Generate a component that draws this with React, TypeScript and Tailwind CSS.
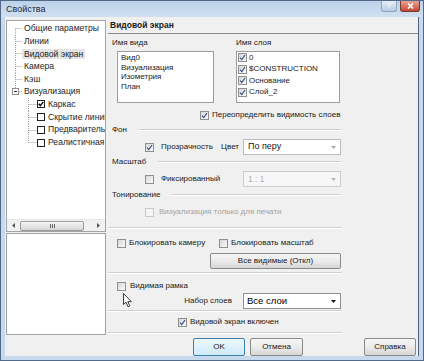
import React from "react";

type BoxProps = { checked?: boolean; disabled?: boolean };

// Win7 style checkbox, scaled down like the screenshot
function Check({ checked, disabled }: BoxProps) {
  return (
    <span
      className={
        "inline-flex w-[9px] h-[9px] shrink-0 items-center justify-center border " +
        (disabled
          ? "border-[#c9c9c9] bg-[#f5f5f5]"
          : "border-[#8e8f8f] bg-gradient-to-br from-[#d6d6d6] to-[#fbfbfb]")
      }
    >
      {checked && (
        <svg width="7" height="7" viewBox="0 0 7 7">
          <path d="M1 3.6 L2.8 5.6 L6 1" fill="none" stroke="#3b4f8c" strokeWidth="1.2" />
        </svg>
      )}
    </span>
  );
}

// classic black checkbox used in the tree
function TreeCheck({ checked }: BoxProps) {
  return (
    <span className="inline-flex w-[8px] h-[8px] shrink-0 items-center justify-center border border-[#222] bg-white">
      {checked && (
        <svg width="6" height="6" viewBox="0 0 6 6">
          <path d="M0.8 2.8 L2.3 4.6 L5.3 0.9" fill="none" stroke="#000" strokeWidth="1.4" />
        </svg>
      )}
    </span>
  );
}

function GroupTitle({ text }: { text: string }) {
  return (
    <div className="h-[14px] flex items-center gap-[12px] pl-[4px] pr-[1px]">
      <span>{text}</span>
      <div className="flex-1 h-[2px] border-t border-[#d0d0d0] border-b border-b-white" />
    </div>
  );
}

function Sep() {
  return <div className="h-[2px] border-t border-[#d0d0d0] border-b border-b-white" />;
}

function Button({ label, width, primary }: { label: string; width: string; primary?: boolean }) {
  return (
    <div
      className={
        "h-full flex items-center justify-center rounded-[2px] border text-[8px] " +
        width +
        " " +
        (primary
          ? "border-[#3c7fb1] bg-gradient-to-b from-[#eef8fd] to-[#cfeaf9]"
          : "border-[#8a8a8a] bg-gradient-to-b from-[#f6f6f6] via-[#ebebeb] to-[#d6d6d6]")
      }
    >
      {label}
    </div>
  );
}

function Arrow({ color }: { color: string }) {
  return (
    <svg width="5" height="3" viewBox="0 0 5 3">
      <path d="M0 0 H5 L2.5 3 Z" fill={color} />
    </svg>
  );
}

const treeRoot = ["Общие параметры", "Линии", "Видовой экран", "Камера", "Кэш"];
const treeKids: [string, boolean][] = [
  ["Каркас", true],
  ["Скрытие линий", false],
  ["Предварительный", false],
  ["Реалистичная", false],
];

function TreeView() {
  return (
    <div className="h-[212px] border border-[#a3a3a3] bg-white flex flex-col text-[8.6px] text-[#1e1e1e]">
      <div className="flex-1 overflow-hidden pt-[1px]">
        {treeRoot.map((t, i) => (
          <div key={t} className="h-[12.7px] flex items-center whitespace-nowrap">
            <svg width="15" height="12.7" className="shrink-0">
              <line
                x1="8.5"
                x2="8.5"
                y1={i === 0 ? "6.35" : "0"}
                y2="12.7"
                stroke="#a0a0a0"
                strokeDasharray="1 1"
              />
              <line x1="8.5" x2="15" y1="6.5" y2="6.5" stroke="#a0a0a0" strokeDasharray="1 1" />
            </svg>
            <span className={"px-[2px] leading-[10px] " + (t === "Видовой экран" ? "bg-[#e4e4e4]" : "")}>
              {t}
            </span>
          </div>
        ))}
        <div className="h-[12.7px] flex items-center whitespace-nowrap">
          <svg width="15" height="12.7" className="shrink-0">
            <line x1="8.5" x2="8.5" y1="0" y2="3.5" stroke="#a0a0a0" strokeDasharray="1 1" />
            <rect x="5.5" y="3.5" width="6" height="6" fill="white" stroke="#8f8f8f" />
            <line x1="7" x2="10" y1="6.5" y2="6.5" stroke="#333" />
            <line x1="12" x2="15" y1="6.5" y2="6.5" stroke="#a0a0a0" strokeDasharray="1 1" />
          </svg>
          <span className="px-[2px]">Визуализация</span>
        </div>
        {treeKids.map(([t, c], i) => (
          <div key={t} className="h-[12.7px] flex items-center whitespace-nowrap">
            <svg width="30" height="12.7" className="shrink-0">
              <line
                x1="21.5"
                x2="21.5"
                y1="0"
                y2={i === treeKids.length - 1 ? "6.5" : "12.7"}
                stroke="#a0a0a0"
                strokeDasharray="1 1"
              />
              <line x1="21.5" x2="30" y1="6.5" y2="6.5" stroke="#a0a0a0" strokeDasharray="1 1" />
            </svg>
            <TreeCheck checked={c} />
            <span className="pl-[3px]">{t}</span>
          </div>
        ))}
      </div>
      {/* horizontal scrollbar */}
      <div className="h-[12px] flex items-center bg-[#f1f1f1] border-t border-[#e6e6e6]">
        <div className="w-[13px] flex justify-center">
          <svg width="3" height="5" viewBox="0 0 3 5">
            <path d="M3 0 V5 L0 2.5 Z" fill="#555" />
          </svg>
        </div>
        <div className="w-[64px] h-[10px] rounded-[2px] border border-[#9c9c9c] bg-gradient-to-b from-[#f5f5f5] to-[#d5d5d5] flex items-center justify-center gap-[1px]">
          <span className="w-px h-[4px] bg-[#666]" />
          <span className="w-px h-[4px] bg-[#666]" />
          <span className="w-px h-[4px] bg-[#666]" />
        </div>
        <div className="flex-1" />
        <div className="w-[13px] flex justify-center">
          <svg width="3" height="5" viewBox="0 0 3 5">
            <path d="M0 0 V5 L3 2.5 Z" fill="#555" />
          </svg>
        </div>
      </div>
    </div>
  );
}

export default function App() {
  return (
    <div className="relative w-[424px] h-[361px] flex flex-col border border-[#53698a] bg-[#c6d9ed] font-['Liberation_Sans',Arial,sans-serif] text-[#1a1a1a] overflow-hidden">
      {/* title bar */}
      <div className="h-[16px] flex items-start justify-between pl-[5px] pr-[3px] bg-gradient-to-b from-[#bcd2ea] to-[#d0e0f1]">
        <span className="text-[9px] leading-[16px] text-[#1e2a38]">Свойства</span>
        <div className="flex gap-[3px]">
          <div className="w-[16px] h-[11px] rounded-b-[3px] border border-t-0 border-[#8ea3bb] bg-gradient-to-b from-[#e3edf7] to-[#b8cce2] flex items-center justify-center text-[8px] font-bold text-[#f4f8fc] leading-none">
            ?
          </div>
          <div className="w-[20px] h-[11px] rounded-b-[3px] border border-t-0 border-[#7a3a30] bg-gradient-to-b from-[#e7a394] to-[#c4462f] flex items-center justify-center">
            <svg width="7" height="6" viewBox="0 0 7 6">
              <path d="M1 0.5 L6 5.5 M6 0.5 L1 5.5" stroke="white" strokeWidth="1.6" />
            </svg>
          </div>
        </div>
      </div>

      {/* client area */}
      <div className="flex-1 flex pl-[4px] pr-[4px] pb-[4px]">
        <div className="flex-1 flex flex-col bg-[#f0f0f0] border-r border-[#4a6584]">
          <div className="h-[318px] flex">
            {/* left column */}
            <div className="ml-[1px] w-[100px] pt-[3px] flex flex-col">
              <TreeView />
              <div className="mt-[1px] h-[102px] border border-[#a3a3a3] bg-white" />
            </div>

            {/* right column */}
            <div className="ml-[2px] flex-1 flex flex-col text-[8px]">
              <div className="h-[16px] flex items-center pl-[2px] text-[8.5px] font-bold">Видовой экран</div>
              <div className="h-px bg-[#8c8c8c]" />
              <div className="w-[234px] flex flex-col">
                <div className="mt-[1px] h-[16px] flex items-center">
                  <span className="w-[128px] pl-[4px]">Имя вида</span>
                  <span>Имя слоя</span>
                </div>
                <div className="h-[52px] flex">
                  <div className="ml-[9px] w-[97px] border border-[#9c9c9c] bg-white pl-[3px] pt-px leading-[9.7px]">
                    <div>Вид0</div>
                    <div>Визуализация</div>
                    <div>Изометрия</div>
                    <div>План</div>
                  </div>
                  <div className="ml-[22px] w-[104px] border border-[#9c9c9c] bg-white pl-[1px]">
                    {["0", "$CONSTRUCTION", "Основание", "Слой_2"].map((l) => (
                      <div key={l} className="h-[11.5px] flex items-center gap-[2px]">
                        <Check checked />
                        <span>{l}</span>
                      </div>
                    ))}
                  </div>
                </div>
                <div className="mt-[5px] h-[14px] flex items-center gap-[3px] pl-[92px]">
                  <Check checked />
                  <span>Переопределить видимость слоев</span>
                </div>
                <div className="mt-[1px]">
                  <GroupTitle text="Фон" />
                </div>
                <div className="mt-[2px] h-[16px] flex items-center pl-[37px] pr-[1px]">
                  <Check checked />
                  <span className="ml-[7px]">Прозрачность</span>
                  <span className="ml-auto">Цвет</span>
                  <div className="ml-[4px] w-[98px] h-full border border-[#bdbdbd] bg-white flex items-center pl-[4px] pr-[4px] text-[9px]">
                    <span className="flex-1">По перу</span>
                    <Arrow color="#a8a8a8" />
                  </div>
                </div>
                <GroupTitle text="Масштаб" />
                <div className="mt-[2px] h-[16px] flex items-center pl-[37px] pr-[1px]">
                  <Check />
                  <span className="ml-[7px]">Фиксированный</span>
                  <div className="ml-auto w-[98px] h-full border border-[#cdcdcd] bg-[#f7f7f7] flex items-center pl-[4px] pr-[4px] text-[8.5px] text-[#b0b0b0]">
                    <span className="flex-1">1 : 1</span>
                    <Arrow color="#b5b5b5" />
                  </div>
                </div>
                <div className="mt-[1px]">
                  <GroupTitle text="Тонирование" />
                </div>
                <div className="mt-[3px] h-[14px] flex items-center pl-[37px] text-[#a3a3a3]">
                  <Check disabled />
                  <span className="ml-[5px]">Визуализация только для печати</span>
                </div>
                <div className="mt-[8px]">
                  <Sep />
                </div>
                <div className="mt-[7px] h-[14px] flex items-center pl-[9px]">
                  <div className="w-[102px] flex items-center gap-[3px]">
                    <Check />
                    <span>Блокировать камеру</span>
                  </div>
                  <Check />
                  <span className="ml-[3px]">Блокировать масштаб</span>
                </div>
                <div className="mt-[3px] h-[16px] flex justify-end pr-[1px]">
                  <Button label="Все видимые (Откл)" width="w-[131px]" />
                </div>
                <div className="mt-[3px]">
                  <Sep />
                </div>
                <div className="mt-[5px] h-[14px] flex items-center pl-[9px] gap-[4px]">
                  <Check />
                  <span>Видимая рамка</span>
                </div>
                <div className="h-[16px] flex items-center justify-end pr-[1px]">
                  <span className="mr-[11px]">Набор слоев</span>
                  <div className="w-[98px] h-full border border-[#8f8f8f] bg-white flex items-center pl-[3px] pr-[4px] text-[9.5px] text-black">
                    <span className="flex-1">Все слои</span>
                    <Arrow color="#111" />
                  </div>
                </div>
                <div className="mt-[1px]">
                  <Sep />
                </div>
                <div className="mt-[3px] h-[14px] flex items-center pl-[70px] gap-[3px]">
                  <Check checked />
                  <span>Видовой экран включен</span>
                </div>
                <div className="mt-[3px]">
                  <Sep />
                </div>
              </div>
            </div>
          </div>

          {/* dialog buttons */}
          <div className="pt-[3px] h-[18px] flex pl-[188px] pr-[2px] box-content">
            <Button label="OK" width="w-[52px]" primary />
            <div className="ml-[5px]">
              <Button label="Отмена" width="w-[53px]" />
            </div>
            <div className="ml-auto">
              <Button label="Справка" width="w-[52px]" />
            </div>
          </div>
        </div>
      </div>

      {/* mouse pointer */}
      <svg className="absolute left-[122px] top-[292px]" width="10" height="15" viewBox="0 0 10 15">
        <path d="M0.5 0.5 V11.5 L3 9.2 L5 13.8 L6.8 13 L4.8 8.6 L8.3 8.6 Z" fill="white" stroke="#222" strokeWidth="0.9" />
      </svg>
    </div>
  );
}
